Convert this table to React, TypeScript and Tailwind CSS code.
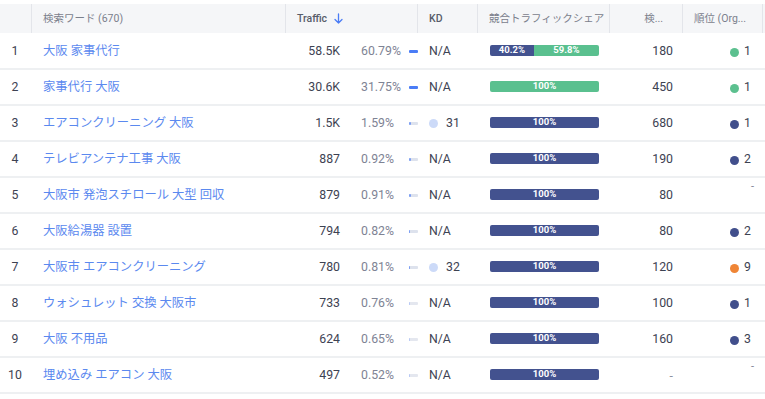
import React from "react";

type Row = {
  n: number;
  kw: string;
  traffic: string;
  pct: string;
  fill: number;
  strong: boolean;
  kd: string | null;
  share: [number, number] | null; // navy, green
  shareGreen?: boolean;
  vol: string;
  rank: { color: string; v: string } | null;
};

const rows: Row[] = [
  { n: 1, kw: "大阪 家事代行", traffic: "58.5K", pct: "60.79%", fill: 9, strong: true, kd: null, share: [40.2, 59.8], vol: "180", rank: { color: "#5cc08f", v: "1" } },
  { n: 2, kw: "家事代行 大阪", traffic: "30.6K", pct: "31.75%", fill: 9, strong: true, kd: null, share: null, shareGreen: true, vol: "450", rank: { color: "#5cc08f", v: "1" } },
  { n: 3, kw: "エアコンクリーニング 大阪", traffic: "1.5K", pct: "1.59%", fill: 2, strong: false, kd: "31", share: null, vol: "680", rank: { color: "#414f8c", v: "1" } },
  { n: 4, kw: "テレビアンテナ工事 大阪", traffic: "887", pct: "0.92%", fill: 1.5, strong: false, kd: null, share: null, vol: "190", rank: { color: "#414f8c", v: "2" } },
  { n: 5, kw: "大阪市 発泡スチロール 大型 回収", traffic: "879", pct: "0.91%", fill: 1.5, strong: false, kd: null, share: null, vol: "80", rank: null },
  { n: 6, kw: "大阪給湯器 設置", traffic: "794", pct: "0.82%", fill: 1.2, strong: false, kd: null, share: null, vol: "80", rank: { color: "#414f8c", v: "2" } },
  { n: 7, kw: "大阪市 エアコンクリーニング", traffic: "780", pct: "0.81%", fill: 1.2, strong: false, kd: "32", share: null, vol: "120", rank: { color: "#ef8536", v: "9" } },
  { n: 8, kw: "ウォシュレット 交換 大阪市", traffic: "733", pct: "0.76%", fill: 1, strong: false, kd: null, share: null, vol: "100", rank: { color: "#414f8c", v: "1" } },
  { n: 9, kw: "大阪 不用品", traffic: "624", pct: "0.65%", fill: 1, strong: false, kd: null, share: null, vol: "160", rank: { color: "#414f8c", v: "3" } },
  { n: 10, kw: "埋め込み エアコン 大阪", traffic: "497", pct: "0.52%", fill: 1, strong: false, kd: null, share: null, vol: "-", rank: null },
];

const cols = "grid grid-cols-[32px_254px_132px_60px_132px_73px_80px_2px]";

export default function App() {
  return (
    <div
      className="w-[765px] h-[399px] bg-white overflow-hidden pt-[4px]"
      style={{ fontFamily: 'Roboto, "Noto Sans CJK JP", sans-serif' }}
    >
      {/* header */}
      <div className={`${cols} h-[29px] bg-[#f5f6f8] text-[10.5px] text-[#7b808c]`}>
        <div className="border-r-[1.5px] border-[#e3e5ea]" />
        <div className="flex items-center pl-[11px] border-r-[1.5px] border-[#e3e5ea]">検索ワード (670)</div>
        <div className="flex items-center pl-[11px] border-r-[1.5px] border-[#e3e5ea] font-medium text-[#585d6a]">
          Traffic
          <svg className="ml-[7px]" width="9" height="11" viewBox="0 0 9 11" fill="none" stroke="#4a7cf6" strokeWidth="1.3" strokeLinecap="round" strokeLinejoin="round">
            <path d="M4.5 1v9M1 6.5l3.5 3.5L8 6.5" />
          </svg>
        </div>
        <div className="flex items-center pl-[11px] border-r-[1.5px] border-[#e3e5ea] font-medium text-[#585d6a]">KD</div>
        <div className="flex items-center pl-[11px] border-r-[1.5px] border-[#e3e5ea]">競合トラフィックシェア</div>
        <div className="flex items-center justify-end pr-[19px] border-r-[1.5px] border-[#e3e5ea]">検...</div>
        <div className="flex items-center pl-[11px] border-r-[1.5px] border-[#e3e5ea]">順位 (Org...</div>
        <div />
      </div>
      <div className="mt-[1px]">
        {rows.map((r) => (
          <div key={r.n} className={`${cols} h-[36px] border-b-2 border-[#eef0f2] text-[12.3px] text-[#3d4252]`}>
            <div className="flex items-center justify-center pr-[2px]">{r.n}</div>
            <div className="flex items-center pl-[11px] text-[#5b89ef] mt-[1px]">{r.kw}</div>
            <div className="flex items-center">
              <div className="w-[55px] text-right">{r.traffic}</div>
              <div className="ml-[21px] w-[49px] text-[#7e8394]">{r.pct}</div>
              <div className={`relative w-[9px] h-[3px] mt-[1px] rounded-[1px] ${r.strong ? "bg-[#4a7cf6]" : r.n >= 8 ? "bg-[#e4e7ef]" : "bg-[#dde2ed]"}`}>
                {!r.strong && (
                  <div
                    className={`absolute left-0 top-0 h-[3px] rounded-[1px] ${r.n >= 8 ? "bg-[#b8c9f5]" : "bg-[#7d9ff3]"}`}
                    style={{ width: `${r.fill}px` }}
                  />
                )}
              </div>
            </div>
            <div className="flex items-center pl-[11px]">
              {r.kd ? (
                <>
                  <span className="w-[9px] h-[9px] rounded-full bg-[#ccdaf8] mt-[1px]" />
                  <span className="ml-[8px]">{r.kd}</span>
                </>
              ) : (
                "N/A"
              )}
            </div>
            <div className="flex items-center pl-[12px] -mt-[2px]">
              <div className="flex w-[109px] h-[11px] rounded-[2px] overflow-hidden text-[9.5px] font-bold text-white leading-none">
                {r.share ? (
                  <>
                    <div className="flex items-center justify-center bg-[#43528f]" style={{ width: `${r.share[0]}%` }}>{r.share[0]}%</div>
                    <div className="flex items-center justify-center bg-[#5ac08f]" style={{ width: `${r.share[1]}%` }}>{r.share[1]}%</div>
                  </>
                ) : (
                  <div className={`flex-1 flex items-center justify-center ${r.shareGreen ? "bg-[#5ac08f]" : "bg-[#43528f]"}`}>100%</div>
                )}
              </div>
            </div>
            <div className={`flex items-center justify-end pr-[10px] ${r.vol === "-" ? "text-[#8d92a0] mt-[2px]" : ""}`}>{r.vol}</div>
            <div className="flex justify-end pr-[12px]">
              {r.rank ? (
                <div className="flex items-center mt-[1px]">
                  <span className="w-[9px] h-[9px] rounded-full mt-[1px]" style={{ backgroundColor: r.rank.color }} />
                  <span className="ml-[5px]">{r.rank.v}</span>
                </div>
              ) : (
                <div className="pt-[1px] mr-[-3px] text-[#7e8394] text-[11px]">-</div>
              )}
            </div>
            <div />
          </div>
        ))}
      </div>
    </div>
  );
}
